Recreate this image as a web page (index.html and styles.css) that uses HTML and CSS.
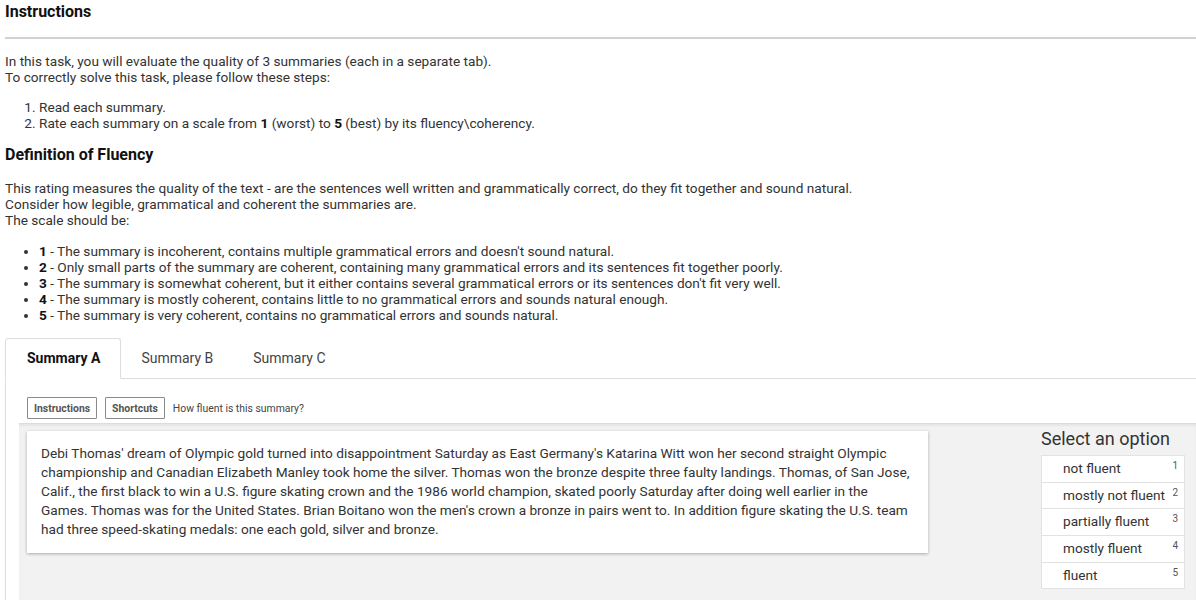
FILE: index.html
```html
<!DOCTYPE html>
<html>
<head>
<meta charset="utf-8">
<link rel="stylesheet" href="styles.css">
</head>
<body>
<div class="page">
  <h1 class="title">Instructions</h1>
  <div class="rule"></div>
  <p class="para">In this task, you will evaluate the quality of 3 summaries (each in a separate tab).<br>To correctly solve this task, please follow these steps:</p>
  <ol class="steps">
    <li>Read each summary.</li>
    <li>Rate each summary on a scale from <b>1</b> (worst) to <b>5</b> (best) by its fluency\coherency.</li>
  </ol>
  <h2 class="subtitle">Definition of Fluency</h2>
  <p class="para para2">This rating measures the quality of the text - are the sentences well written and grammatically correct, do they fit together and sound natural.<br>Consider how legible, grammatical and coherent the summaries are.<br>The scale should be:</p>
  <ul class="scale">
    <li><b>1</b> - The summary is incoherent, contains multiple grammatical errors and doesn't sound natural.</li>
    <li><b>2</b> - Only small parts of the summary are coherent, containing many grammatical errors and its sentences fit together poorly.</li>
    <li><b>3</b> - The summary is somewhat coherent, but it either contains several grammatical errors or its sentences don't fit very well.</li>
    <li><b>4</b> - The summary is mostly coherent, contains little to no grammatical errors and sounds natural enough.</li>
    <li><b>5</b> - The summary is very coherent, contains no grammatical errors and sounds natural.</li>
  </ul>

  <div class="tabs">
    <div class="tab active">Summary A</div>
    <div class="tab">Summary B</div>
    <div class="tab">Summary C</div>
    <div class="tab-fill"></div>
  </div>
  <div class="panel">
    <div class="toolbar">
      <button class="btn">Instructions</button>
      <button class="btn">Shortcuts</button>
      <span class="question">How fluent is this summary?</span>
    </div>
    <div class="workarea">
      <div class="card">Debi Thomas' dream of Olympic gold turned into disappointment Saturday as East Germany's Katarina Witt won her second straight Olympic championship and Canadian Elizabeth Manley took home the silver. Thomas won the bronze despite three faulty landings. Thomas, of San Jose, Calif., the first black to win a U.S. figure skating crown and the 1986 world champion, skated poorly Saturday after doing well earlier in the Games. Thomas was for the United States. Brian Boitano won the men's crown a bronze in pairs went to. In addition figure skating the U.S. team had three speed-skating medals: one each gold, silver and bronze.</div>
      <div class="options">
        <div class="options-title">Select an option</div>
        <div class="option-list">
          <div class="option"><span>not fluent</span><span class="key">1</span></div>
          <div class="option"><span>mostly not fluent</span><span class="key">2</span></div>
          <div class="option"><span>partially fluent</span><span class="key">3</span></div>
          <div class="option"><span>mostly fluent</span><span class="key">4</span></div>
          <div class="option"><span>fluent</span><span class="key">5</span></div>
        </div>
      </div>
    </div>
  </div>
</div>
</body>
</html>
```

FILE: styles.css
```css
html, body {
  margin: 0;
  padding: 0;
  background: #fff;
}
body {
  font-family: Roboto, "Liberation Sans", sans-serif;
  color: #333;
  font-size: 13.65px;
  overflow: hidden;
  height: 600px;
}
.page {
  padding: 0 0 0 5px;
}
.title {
  margin: 0;
  padding-top: 2px;
  font-size: 16px;
  line-height: 20px;
  font-weight: 700;
  color: #111;
}
.rule {
  height: 2px;
  background: #d2d2d2;
  margin-top: 15px;
}
.para {
  margin: 14px 0 0;
  line-height: 16px;
}
.para2 {
  margin-top: 15px;
}
.steps, .scale {
  margin: 14px 0 0;
  padding-left: 34px;
  line-height: 16px;
}
.scale {
  margin-top: 15px;
}
.subtitle {
  margin: 14px 0 0;
  font-size: 16px;
  line-height: 20px;
  font-weight: 700;
  color: #111;
}
b {
  color: #111;
}
.tabs {
  display: flex;
  margin-top: 15px;
  height: 41px;
}
.tab {
  padding: 0 20px;
  font-size: 14px;
  line-height: 40px;
  color: #444;
  border-bottom: 1px solid #ddd;
}
.tab.active {
  border: 1px solid #ddd;
  border-bottom: 1px solid #fff;
  border-radius: 3px 3px 0 0;
  font-weight: 700;
  color: #111;
  padding: 0 20px 0 21px;
  line-height: 39px;
}
.tab-fill {
  flex: 1;
  border-bottom: 1px solid #ddd;
}
.panel {
  border-left: 1px solid #ddd;
  padding-left: 13px;
  height: 221px;
}
.toolbar {
  display: flex;
  align-items: center;
  gap: 8px;
  padding: 18px 0 0 8px;
  height: 22px;
}
.btn {
  font-family: Roboto, "Liberation Sans", sans-serif;
  font-size: 10.4px;
  font-weight: 700;
  color: #555;
  background: #fff;
  border: 1px solid #8a8a8a;
  border-radius: 1px;
  height: 22px;
  padding: 0 6px;
  margin: 0;
}
.question {
  font-size: 10.4px;
  color: #444;
}
.workarea {
  margin-top: 4px;
  background: #f2f2f2;
  border-top: 1px solid #dcdcdc;
  box-shadow: inset 0 2px 2px rgba(0,0,0,0.05);
  display: flex;
  justify-content: space-between;
  align-items: flex-start;
  padding: 7px 11px 0 8px;
  height: 190px;
}
.card {
  width: 873px;
  background: #fff;
  padding: 13px 14px 14px;
  line-height: 19px;
  color: #333;
  box-shadow: 0 1px 3px rgba(0,0,0,0.3);
}
.options {
  width: 144px;
}
.options-title {
  font-size: 18px;
  line-height: 20px;
  color: #333;
  margin-top: -2px;
  margin-bottom: 6px;
}
.option-list {
  background: #fff;
  border: 1px solid #e2e2e2;
}
.option {
  display: flex;
  justify-content: space-between;
  align-items: flex-start;
  height: 25.67px;
  border-top: 1px solid #e2e2e2;
  padding: 0 6px 0 21px;
  line-height: 25px;
  color: #333;
}
.option:first-child {
  border-top: none;
}
.key {
  font-size: 10px;
  line-height: 10px;
  padding-top: 5px;
  color: #555;
}
```
